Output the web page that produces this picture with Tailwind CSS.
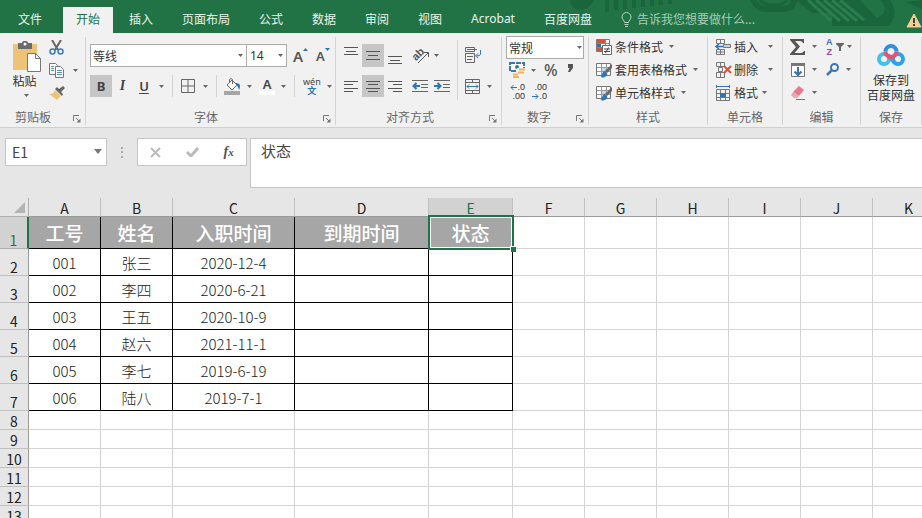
<!DOCTYPE html>
<html lang="zh-CN">
<head>
  <meta charset="UTF-8"/>
  <meta name="viewport" content="width=device-width, initial-scale=1.0"/>
  <title>Excel</title>
  <script src="https://cdn.jsdelivr.net/npm/@tailwindcss/browser@4"></script>
  <style>
    body {
      font-family: 'Noto Sans CJK SC', 'Noto Sans', sans-serif;
    }
    select {
      appearance: none;
    }
  </style>
</head>
<body class="h-screen flex flex-col overflow-hidden bg-[#e6e6e6] text-xs text-[#444444]">

  <!-- Shared icons -->
  <svg class="hidden">
    <symbol id="caret" viewBox="0 0 5 3"><path d="M0 0h5L2.500 3z" fill="#666"/></symbol>
    <symbol id="launcher" viewBox="0 0 8 8">
      <path d="M.5 6V.5H6M3 3l3 3" fill="none" stroke="#777"/><path d="M7.500 3.500v4h-4z" fill="#777"/>
    </symbol>
    <symbol id="tableBrush" viewBox="0 0 17 16">
      <path d="M.5 1.500h14v12H.5z" fill="#fff" stroke="#777"/>
      <path d="M5 5h5v4H5z" fill="#c5d5e8"/>
      <path d="M1 5.500h13M1 9.500h13M5.500 2v11M10.500 2v11" stroke="#999" fill="none"/>
      <path d="M16 2v4l-5 5-2-2z" fill="#666"/>
      <path d="M8.500 9l3 3c-1 3-4 4-7 3 2-1 1-5 4-6z" fill="#2e75b6"/>
    </symbol>
  </svg>

  <!-- Tabs -->
  <nav class="relative h-[33px] shrink-0 flex items-end gap-[3px] bg-[#217346] text-[#e8f3ec] whitespace-nowrap overflow-hidden">
    <svg class="absolute right-0 top-0 w-[362px] h-[33px]" viewBox="0 0 362 33" fill="none">
      <g stroke="#1b653c">
        <path d="M10 0q1 9 9 10 10 0 15-10" fill="#1b653c" stroke="none"/>
        <path d="M47 0v12M56 0v10M65 0v9M74 0v8M83 0v7M92 0v6M101 0v5M110 0v4" stroke-width="4"/>
        <path d="M192 -3q4 12 14 12h18q10-1 10-9" stroke-width="6"/>
        <path d="M200 0q5 6 15 5 9 0 12-5" stroke-width="3"/>
        <path d="M236 0h94q8 10 2 22l-4 4h-56v-13h-20z" fill="#1b653c" stroke="none"/>
        <path d="M345 2l17-2v9z" fill="#1b653c" stroke="none"/>
      </g>
      <path d="M248 0l23 21M256 0l24 21M264 0l25 21M272 0l25 21M280 0l24 20" stroke="#2b7d50" stroke-width="3"/>
      <path d="M300 0h20q7 6 3 14l-6 4z" fill="#217346"/>
    </svg>
    <button class="w-[60px] h-[26px] pb-[3px]">文件</button>
    <button class="relative w-[50px] h-[26px] pb-[3px] bg-[#f1f1f1] text-[#217346]">开始</button>
    <button class="relative h-[26px] pb-[3px] px-[13px]">插入</button>
    <button class="relative h-[26px] pb-[3px] px-[13px]">页面布局</button>
    <button class="relative h-[26px] pb-[3px] px-[13px]">公式</button>
    <button class="relative h-[26px] pb-[3px] px-[13px]">数据</button>
    <button class="relative h-[26px] pb-[3px] px-[13px]">审阅</button>
    <button class="relative h-[26px] pb-[3px] px-[13px]">视图</button>
    <button class="relative h-[26px] pb-[3px] px-[13px] font-['Noto_Sans']">Acrobat</button>
    <button class="relative h-[26px] pb-[3px] px-[13px]">百度网盘</button>
    <button class="relative h-[26px] pb-[2px] pl-[13px] flex items-center gap-[5px] text-[#a6cdb6]">
      <svg class="w-[11px] h-[15px]" viewBox="0 0 11 15" fill="none" stroke="#b5d5c2">
        <path d="M3.500 10.500c0-2-2.500-3-2.500-5.500a4.500 4.500 0 0 1 9 0c0 2.500-2.500 3.500-2.500 5.500zM3.500 12.500h4M4 14.500h3"/>
      </svg>
      告诉我您想要做什么...
    </button>
    <svg class="relative ml-auto mb-[5px] w-[16px] h-[15px] shrink-0" viewBox="0 0 16 15">
      <path d="M8 1l7 13H1z" fill="#f3cf93" stroke="#f3cf93" stroke-linejoin="round"/>
      <path d="M8 5v5M8 11v2" stroke="#444" stroke-width="2"/>
    </svg>
  </nav>

  <!-- Ribbon -->
  <div class="h-[95px] shrink-0 flex bg-[#f1f1f1] border-b border-[#d0d0d0] pt-1 pb-0.5 whitespace-nowrap text-[#333333]">

    <!-- Clipboard -->
    <section class="w-[86px] shrink-0 border-r border-[#d4d4d4] flex flex-col">
      <div class="flex-1 flex pl-3 gap-2">
        <button class="flex flex-col items-center self-start pt-1">
          <svg class="w-[29px] h-[31px]" viewBox="0 0 29 31">
            <path d="M1 3h24v26H1z" fill="#edc377"/>
            <path d="M6 2h4c0-3 6-3 6 0h4v6H6z" fill="#6b6b6b"/><circle cx="13" cy="3" r="1.500" fill="#fff"/>
            <path d="M15.500 12.500h8l5 5v13h-13z" fill="#fff" stroke="#777"/><path d="M23.500 12.500v5h5" fill="none" stroke="#777"/>
          </svg>
          <span class="leading-[18px] pr-1">粘贴</span>
          <svg class="w-[5px] h-[3px] mt-1"><use href="#caret"/></svg>
        </button>
        <div class="flex flex-col items-start gap-2 pt-[3px]">
          <button aria-label="剪切">
            <svg class="w-[15px] h-[15px]" viewBox="0 0 15 15" fill="none">
              <path d="M3 0l6 10M12 0L6 10" stroke="#666" stroke-width="2"/>
              <circle cx="3.500" cy="11.500" r="2.500" stroke="#3d7ab8" stroke-width="1.500"/><circle cx="11.500" cy="11.500" r="2.500" stroke="#3d7ab8" stroke-width="1.500"/>
            </svg>
          </button>
          <button class="flex items-center gap-2" aria-label="复制">
            <svg class="w-[16px] h-[15px]" viewBox="0 0 16 15" fill="#fff" stroke="#6a7a8a">
              <path d="M.5.500h6l2 2v9h-8z"/><path d="M6.500 3.500h5l3 3v8h-8z"/>
              <path d="M2 3.500h3M2 5.500h3M2 7.500h3M8 7.500h5M8 9.500h5M8 11.500h5" stroke="#5b8fc4"/>
            </svg>
            <svg class="w-[5px] h-[3px]"><use href="#caret"/></svg>
          </button>
          <button aria-label="格式刷">
            <svg class="w-[16px] h-[14px]" viewBox="0 0 16 14">
              <path d="M6 4l6 6-4 4-8-6c3 0 5-1 6-4z" fill="#edc377"/>
              <path d="M6 3l7 7 1-2-2-2 4-4-2-2-4 3-2-2z" fill="#666"/>
            </svg>
          </button>
        </div>
      </div>
      <div class="h-4 flex items-center">
        <span class="flex-1 pl-[15px] leading-4 text-[#666666]">剪贴板</span>
        <button class="mr-1 mt-1" aria-label="剪贴板设置"><svg class="w-2 h-2"><use href="#launcher"/></svg></button>
      </div>
    </section>

    <!-- Font -->
    <section class="w-[250px] shrink-0 border-r border-[#d4d4d4] flex flex-col">
      <div class="flex-1 flex flex-col pl-1 pt-[7px] gap-2">
        <div class="flex items-center">
          <div class="relative">
            <select aria-label="字体" class="block w-[157px] h-[23px] bg-white border border-[#ababab] pl-0.5 leading-5"><option>等线</option></select>
            <svg class="absolute right-1 top-[10px] w-[5px] h-[3px] pointer-events-none"><use href="#caret"/></svg>
          </div>
          <div class="relative">
            <select aria-label="字号" class="block w-[40px] h-[23px] bg-white border border-l-0 border-[#ababab] pl-[3px] leading-5 font-['Noto_Sans']"><option>14</option></select>
            <svg class="absolute right-1 top-[10px] w-[5px] h-[3px] pointer-events-none"><use href="#caret"/></svg>
          </div>
          <button class="ml-[6px] flex items-start font-['Noto_Sans'] font-semibold text-[15px] leading-5 text-[#555555]" aria-label="增大字号">A<svg class="w-[5px] h-[3px] mt-0.5" viewBox="0 0 5 3"><path d="M0 3h5L2.500 0z" fill="#2e75b6"/></svg></button>
          <button class="ml-2 flex items-start font-['Noto_Sans'] font-semibold text-[13px] leading-5 text-[#555555]" aria-label="减小字号">A<svg class="w-[5px] h-[3px] mt-0.5" viewBox="0 0 5 3"><path d="M0 0h5L2.500 3z" fill="#2e75b6"/></svg></button>
        </div>
        <div class="flex items-center h-[22px] font-['Noto_Sans'] text-sm text-[#444444]">
          <button class="w-[22px] h-[22px] bg-[#c6c6c6] font-bold text-[13px]">B</button>
          <button class="w-[21px] h-[22px] italic font-['Liberation_Serif'] font-bold">I</button>
          <button class="w-[22px] h-[22px] font-semibold underline underline-offset-2 text-[13px]">U</button>
          <svg class="ml-1 w-[5px] h-[3px]"><use href="#caret"/></svg>
          <span class="ml-2 w-px h-[22px] bg-[#d4d4d4]"></span>
          <button class="ml-2 flex items-center gap-2" aria-label="边框">
            <svg class="w-[14px] h-[14px]" viewBox="0 0 14 14" fill="none" stroke="#666"><path d="M.5.500h13v13H.5zM7 0v14M0 7h14"/></svg>
            <svg class="w-[5px] h-[3px]"><use href="#caret"/></svg>
          </button>
          <span class="ml-2 w-px h-[22px] bg-[#d4d4d4]"></span>
          <button class="ml-[7px] flex items-center gap-[6px]" aria-label="填充颜色">
            <svg class="w-[17px] h-[17px]" viewBox="0 0 17 17">
              <path d="M0 13h16v4H0z" fill="#a6a6a6"/>
              <path d="M8 2l5 5-5 5-5-5z" fill="#fff" stroke="#666"/><path d="M5.500 5V1.500q1.500-2 3 0V6" fill="none" stroke="#666"/>
              <path d="M12 5c4 0 5 3 3 7-1-3-1-4-3-5z" fill="#2e75b6"/>
            </svg>
            <svg class="w-[5px] h-[3px]"><use href="#caret"/></svg>
          </button>
          <button class="ml-[7px] flex items-center gap-[6px]" aria-label="字体颜色">
            <span class="w-[16px] border-b-4 border-white leading-[14px] font-semibold text-[13px]">A</span>
            <svg class="w-[5px] h-[3px]"><use href="#caret"/></svg>
          </button>
          <span class="ml-2 w-px h-[22px] bg-[#d4d4d4]"></span>
          <button class="ml-2 flex items-center gap-[6px]" aria-label="拼音指南">
            <span class="flex flex-col items-center text-[9px] leading-[9px]">wén<span class="font-['Noto_Sans_CJK_SC'] font-bold text-[#2e75b6]">文</span></span>
            <svg class="w-[5px] h-[3px]"><use href="#caret"/></svg>
          </button>
        </div>
      </div>
      <div class="h-4 flex items-center">
        <span class="flex-1 text-center leading-4 pl-[3px] text-[#666666]">字体</span>
        <button class="mr-1 mt-1" aria-label="字体设置"><svg class="w-2 h-2"><use href="#launcher"/></svg></button>
      </div>
    </section>

    <!-- Alignment -->
    <section class="w-[166px] shrink-0 border-r border-[#d4d4d4] flex flex-col">
      <div class="flex-1 flex pl-1 pt-[7px]">
        <div class="flex flex-col gap-2">
          <div class="flex items-center">
            <button class="w-[22px] h-[23px] flex justify-center pt-[3px]" aria-label="顶端对齐"><svg class="w-[14px] h-2" viewBox="0 0 14 8" stroke="#555"><path d="M0 .5h14M2 4.500h10M0 7.500h14"/></svg></button>
            <button class="w-[22px] h-[23px] flex items-center justify-center bg-[#c6c6c6]" aria-label="垂直居中"><svg class="w-[14px] h-[9px]" viewBox="0 0 14 9" stroke="#555"><path d="M0 .5h14M2 4.500h10M0 8.500h14"/></svg></button>
            <button class="w-[22px] h-[23px] flex items-end justify-center pb-[3px]" aria-label="底端对齐"><svg class="w-[14px] h-2" viewBox="0 0 14 8" stroke="#555"><path d="M0 .5h14M2 4.500h10M0 7.500h14"/></svg></button>
            <button class="ml-[6px] flex items-center gap-1" aria-label="方向">
              <svg class="w-[18px] h-[18px] overflow-visible" viewBox="0 0 18 18"><text x="0" y="11" transform="rotate(-45 6 8)" font-size="11" font-family="Liberation Sans" font-weight="700" fill="#555">ab</text><path d="M6 16L16 6M16.500 10V5.500H12" fill="none" stroke="#555"/></svg>
              <svg class="w-[5px] h-[3px]"><use href="#caret"/></svg>
            </button>
          </div>
          <div class="flex items-center h-[22px]">
            <button class="w-[22px] h-[22px] flex items-center justify-center" aria-label="左对齐"><svg class="w-[14px] h-[11px]" viewBox="0 0 14 11" stroke="#555"><path d="M0 .5h14M0 3.500h9M0 7.500h14M0 10.500h9"/></svg></button>
            <button class="w-[22px] h-[22px] flex items-center justify-center bg-[#c6c6c6]" aria-label="居中"><svg class="w-[14px] h-[11px]" viewBox="0 0 14 11" stroke="#555"><path d="M0 .5h14M2 3.500h10M0 7.500h14M2 10.500h10"/></svg></button>
            <button class="w-[22px] h-[22px] flex items-center justify-center" aria-label="右对齐"><svg class="w-[14px] h-[11px]" viewBox="0 0 14 11" stroke="#555"><path d="M0 .5h14M5 3.500h9M0 7.500h14M5 10.500h9"/></svg></button>
            <button class="ml-[6px]" aria-label="减少缩进"><svg class="w-4 h-[14px]" viewBox="0 0 16 14"><path d="M0 1.500h16M9 5.500h7M9 8.500h7M0 12.500h16" stroke="#666"/><path d="M8 7H2M4.500 4l-3 3 3 3" stroke="#2e75b6" stroke-width="2" fill="none"/></svg></button>
            <button class="ml-[6px]" aria-label="增加缩进"><svg class="w-4 h-[14px]" viewBox="0 0 16 14"><path d="M0 1.500h16M9 5.500h7M9 8.500h7M0 12.500h16" stroke="#666"/><path d="M0 7h6M3.500 4l3 3-3 3" stroke="#2e75b6" stroke-width="2" fill="none"/></svg></button>
          </div>
        </div>
        <span class="ml-[7px] -mt-1 w-px h-[60px] bg-[#d4d4d4]"></span>
        <div class="ml-[7px] flex flex-col gap-4 pt-[3px]">
          <button aria-label="自动换行"><svg class="w-[16px] h-[16px]" viewBox="0 0 16 16" fill="none" stroke="#666">
            <path d="M.5.500h9v4h-9zM.5 6.500h9v9h-9M.5 6v9"/><path d="M2 2.500h10M2 9.500h6M2 12.500h5"/><path d="M15.500 3v4q0 2-4 2M13 6.500L10.500 9l2.500 2" stroke="#2e75b6"/></svg></button>
          <button class="flex items-center gap-[7px]" aria-label="合并后居中">
            <svg class="w-[15px] h-[15px]" viewBox="0 0 15 15" fill="none" stroke="#666"><path d="M.5.500h14v14H.5zM0 3.500h15M0 11.500h15M7.500 0v3M7.500 12v3"/><path d="M2 7.500h11M4 5.500l-2 2 2 2M11 5.500l2 2-2 2" stroke="#2e75b6"/></svg>
            <svg class="w-[5px] h-[3px]"><use href="#caret"/></svg>
          </button>
        </div>
      </div>
      <div class="h-4 flex items-center">
        <span class="flex-1 text-center leading-4 pr-[5px] text-[#666666]">对齐方式</span>
        <button class="mr-1 mt-1" aria-label="对齐设置"><svg class="w-2 h-2"><use href="#launcher"/></svg></button>
      </div>
    </section>

    <!-- Number -->
    <section class="w-[87px] shrink-0 border-r border-[#d4d4d4] flex flex-col">
      <div class="flex-1 flex flex-col pl-1 -mt-px">
        <div class="relative">
          <select aria-label="数字格式" class="block w-[78px] h-[23px] bg-white border border-[#ababab] pl-0.5 leading-5"><option>常规</option></select>
          <svg class="absolute right-[6px] top-[10px] w-[5px] h-[3px] pointer-events-none"><use href="#caret"/></svg>
        </div>
        <div class="flex items-center h-[22px] pl-[3px] font-['Noto_Sans']">
          <button class="flex items-center gap-[6px]" aria-label="会计数字格式">
            <svg class="w-[16px] h-[16px]" viewBox="0 0 16 16"><path d="M1 1h14v8H1z" fill="#fff" stroke="#3d76b4" stroke-width="2" stroke-dasharray="5 1"/><circle cx="8" cy="5" r="2" fill="#2e75b6"/><path d="M8 6h8v10H3v-4h5z" fill="#f1f1f1"/><path d="M10 7.500h6M9 10.500h6M4 12.500h5M4 15h6" stroke="#edb45a" stroke-width="2"/></svg>
            <svg class="w-[5px] h-[3px]"><use href="#caret"/></svg>
          </button>
          <button class="ml-2 text-base leading-5 font-medium text-[#555555]">%</button>
          <button class="ml-[10px] mb-1" aria-label="千位分隔"><svg class="w-[5px] h-[8px]" viewBox="0 0 5 8"><path d="M0 0h5v4L2 8H0l1.500-4H0z" fill="#555"/></svg></button>
        </div>
        <div class="flex items-center h-[22px] pl-[3px] gap-[6px] font-['Liberation_Sans'] text-[9px] leading-[9px]">
          <button class="w-[16px] flex flex-col items-end"><span class="flex items-center"><svg class="w-[7px] h-[7px]" viewBox="0 0 7 7" fill="none" stroke="#2e75b6"><path d="M7 3.500H1M3.500 1L1 3.500 3.500 6"/></svg>.0</span><span>.00</span></button>
          <button class="w-[16px] flex flex-col items-end"><span>.00</span><span class="flex items-center"><svg class="w-[7px] h-[7px]" viewBox="0 0 7 7" fill="none" stroke="#2e75b6"><path d="M0 3.500h6M3.500 1L6 3.500 3.500 6"/></svg>.0</span></button>
        </div>
      </div>
      <div class="h-4 flex items-center">
        <span class="flex-1 text-center leading-4 text-[#666666]">数字</span>
        <button class="mr-1 mt-1" aria-label="数字设置"><svg class="w-2 h-2"><use href="#launcher"/></svg></button>
      </div>
    </section>

    <!-- Styles -->
    <section class="w-[119px] shrink-0 border-r border-[#d4d4d4] flex flex-col">
      <div class="flex-1 flex flex-col items-start pl-[7px] -mt-0.5">
        <button class="h-[23px] flex items-center">
          <svg class="w-[17px] h-[16px]" viewBox="0 0 17 16"><path d="M.5.500h13v12H.5z" fill="#fff" stroke="#777"/><path d="M1 1h8v3H1z" fill="#d0553a"/><path d="M1 5h4v3H1z" fill="#2e75b6"/><path d="M1 9h5v3H1z" fill="#d0553a"/><path d="M1 4.500h12M1 8.500h12M9.500 1v11" stroke="#888"/><path d="M6.500 6.500h9v9h-9z" fill="#fff" stroke="#666"/><path d="M8 10h6M8 12.500h6M12.500 8.500l-3 5.500" stroke="#444"/></svg>
          <span class="ml-0.5 mr-[6px]">条件格式</span><svg class="w-[5px] h-[3px]"><use href="#caret"/></svg>
        </button>
        <button class="h-[23px] flex items-center">
          <svg class="w-[17px] h-[16px]"><use href="#tableBrush"/></svg>
          <span class="ml-0.5 mr-[6px]">套用表格格式</span><svg class="w-[5px] h-[3px]"><use href="#caret"/></svg>
        </button>
        <button class="h-[23px] flex items-center">
          <svg class="w-[17px] h-[16px]"><use href="#tableBrush"/></svg>
          <span class="ml-0.5 mr-[6px]">单元格样式</span><svg class="w-[5px] h-[3px]"><use href="#caret"/></svg>
        </button>
      </div>
      <div class="h-4 text-center leading-4 text-[#666666]">样式</div>
    </section>

    <!-- Cells -->
    <section class="w-[75px] shrink-0 border-r border-[#d4d4d4] flex flex-col">
      <div class="flex-1 flex flex-col items-start pl-[7px] -mt-0.5">
        <button class="h-[23px] flex items-center">
          <svg class="w-[17px] h-[16px]" viewBox="0 0 17 16" fill="none" stroke="#777"><path d="M1.500.500h8v4h-8zM5.500 0v4M1.500 10.500h8v5h-8zM5.500 10v6M1 13h9"/><path d="M8.500 5.500h7v3h-7z" fill="#c5d5e8"/><path d="M8 7.500H1M4 5L1 7.500 4 10" stroke="#2e75b6" stroke-width="1.500"/></svg>
          <span class="ml-0.5 mr-[10px]">插入</span><svg class="w-[5px] h-[3px]"><use href="#caret"/></svg>
        </button>
        <button class="h-[23px] flex items-center">
          <svg class="w-[17px] h-[16px]" viewBox="0 0 17 16" fill="none" stroke="#777"><path d="M1.500.500h8v4h-8zM5.500 0v4M1.500 10.500h8v5h-8zM5.500 10v6M3.500 5.500h4v4h-4z"/><path d="M9 4l7 7M16 4l-7 7" stroke="#d8533a" stroke-width="2"/></svg>
          <span class="ml-0.5 mr-[10px]">删除</span><svg class="w-[5px] h-[3px]"><use href="#caret"/></svg>
        </button>
        <button class="h-[23px] flex items-center">
          <svg class="w-[17px] h-[16px]" viewBox="0 0 17 16" fill="none" stroke="#777"><path d="M1.500 4.500h13v11h-13zM1 8.500h14M1 12.500h14M5.500 4v12M10.500 4v12"/><path d="M5 8h6v4H5z" fill="#2e75b6" stroke="none"/><path d="M1.500 0v3M14.500 0v3M2 1.500h12" stroke="#2e75b6"/></svg>
          <span class="ml-0.5 mr-1">格式</span><svg class="w-[5px] h-[3px]"><use href="#caret"/></svg>
        </button>
      </div>
      <div class="h-4 text-center leading-4 text-[#666666]">单元格</div>
    </section>

    <!-- Editing -->
    <section class="w-[78px] shrink-0 border-r border-[#d4d4d4] flex flex-col">
      <div class="flex-1 grid grid-cols-[36px_1fr] auto-rows-[23px] content-start pl-[7px] -mt-0.5">
        <button class="flex items-center gap-[6px]" aria-label="自动求和"><svg class="w-4 h-4" viewBox="0 0 16 16"><path d="M0 0h14v4h-1q-1-2-3-2H5l5 5.500L4.500 14H11q2 0 3-2h1v4H0v-1l6-7-6-7z" fill="#555"/></svg><svg class="w-[5px] h-[3px]"><use href="#caret"/></svg></button>
        <button class="flex items-center gap-[3px]" aria-label="排序和筛选">
          <span class="flex flex-col font-['Liberation_Sans'] font-bold text-[9px] leading-[10px] text-[#3d76b4]">A<span class="text-[#9b3fb5]">Z</span></span>
          <svg class="w-2 h-2" viewBox="0 0 8 8"><path d="M0 0h8v1L5 4v4H3V4L0 1z" fill="#666"/></svg>
          <svg class="w-[5px] h-[3px]"><use href="#caret"/></svg>
        </button>
        <button class="flex items-center gap-[6px]" aria-label="填充"><svg class="w-4 h-4" viewBox="0 0 16 16"><path d="M1.500 1.500h13v13h-13z" fill="#fff" stroke="#777"/><path d="M1 1h14v3H1z" fill="#777"/><path d="M8 5v8M4.500 9.500L8 13l3.500-3.500" fill="none" stroke="#2e75b6" stroke-width="2"/></svg><svg class="w-[5px] h-[3px]"><use href="#caret"/></svg></button>
        <button class="flex items-center gap-[6px]" aria-label="查找和选择"><svg class="w-[14px] h-[13px]" viewBox="0 0 14 13" fill="none" stroke="#3d76b4"><circle cx="8.500" cy="4.500" r="3.500" stroke-width="2"/><path d="M6 7l-5 5" stroke-width="2.500"/></svg><svg class="w-[5px] h-[3px]"><use href="#caret"/></svg></button>
        <button class="flex items-center gap-[6px]" aria-label="清除"><svg class="w-4 h-4" viewBox="0 0 16 16"><path d="M9 1l5 4-5 6-6-4z" fill="#e8798c"/><path d="M3 7l6 4-2 2H4l-3-3z" fill="#f0a3ae"/><path d="M6 14.500h9" stroke="#777"/></svg><svg class="w-[5px] h-[3px]"><use href="#caret"/></svg></button>
      </div>
      <div class="h-4 text-center leading-4 text-[#666666]">编辑</div>
    </section>

    <!-- Baidu netdisk -->
    <section class="w-[61px] shrink-0 border-r border-[#d4d4d4] flex flex-col">
      <button class="flex-1 flex flex-col items-center justify-start pt-[6px] leading-[15px]">
        <svg class="w-[28px] h-[24px] mb-[5px]" viewBox="0 0 28 24" fill="none" stroke-width="4">
          <circle cx="7" cy="16" r="5" stroke="#45c0ee"/>
          <circle cx="21" cy="16" r="5" stroke="#2ba5ea"/>
          <path d="M11 12l7 8" stroke="#2ba5ea"/>
          <path d="M8.500 8.500a5.500 5.500 0 0 1 11 0" stroke="#2f8de4"/>
          <path d="M8.500 8.500a5.500 5.500 0 0 0 11 0" stroke="#ee4f6b"/>
        </svg>
        <span>保存到</span><span>百度网盘</span>
      </button>
      <div class="h-4 text-center leading-4 text-[#666666]">保存</div>
    </section>
  </div>

  <!-- Formula bar -->
  <div class="h-[70px] shrink-0 flex items-start pt-[10px] pl-[5px]">
    <div class="relative">
      <input type="text" aria-label="名称框" value="E1" class="block w-[102px] h-7 bg-white border border-[#c6c6c6] pl-[6px] text-sm text-[#444444]"/>
      <svg class="absolute right-[5px] top-[11px] w-[8px] h-[5px]" viewBox="0 0 8 5"><path d="M0 0h8L4 5z" fill="#777"/></svg>
    </div>
    <svg class="ml-[14px] mt-[9px] w-[2px] h-[11px]" viewBox="0 0 2 11" fill="#aaa"><path d="M0 0h2v2H0zM0 4h2v2H0zM0 9h2v2H0z"/></svg>
    <div class="ml-[14px] w-[110px] h-7 bg-white border border-[#c6c6c6] flex items-center justify-around">
      <button aria-label="取消"><svg class="w-[11px] h-[11px]" viewBox="0 0 11 11"><path d="M1 1l9 9M10 1l-9 9" stroke="#bbb" stroke-width="2"/></svg></button>
      <button aria-label="输入"><svg class="w-[13px] h-[10px]" viewBox="0 0 13 10"><path d="M1 5l4 4 7-8" fill="none" stroke="#bbb" stroke-width="3"/></svg></button>
      <button class="font-['Liberation_Serif'] italic font-bold text-sm leading-4 text-[#555555]">f<span class="text-[11px]">x</span></button>
    </div>
    <textarea aria-label="编辑栏" class="ml-[3px] flex-1 h-[50px] resize-none bg-white border border-r-0 border-[#c6c6c6] pl-[10px] pt-px text-[15px] leading-[22px] text-[#444444]">状态</textarea>
  </div>

  <!-- Sheet -->
  <div class="flex-1 overflow-hidden bg-white">
    <table class="table-fixed border-separate border-spacing-0 w-[945px] text-center text-[15px] text-[#222222]">
      <colgroup>
        <col class="w-[29px]"><col class="w-[72px]"><col class="w-[72px]"><col class="w-[122px]"><col class="w-[134px]"><col class="w-[84px]">
        <col><col><col><col><col><col>
      </colgroup>
      <thead>
        <tr id="letters" class="h-[19px] text-sm leading-4 bg-[#e6e6e6]">
          <th class="p-0 border-r border-b border-[#b0b0b0]">
            <svg class="ml-auto mr-[3px] w-[11px] h-[11px]" viewBox="0 0 11 11"><path d="M11 0v11H0z" fill="#b4b4b4"/></svg>
          </th>
        </tr>
      </thead>
      <tbody id="sheetBody"></tbody>
    </table>
  </div>

  <script>
    const letters = ['A', 'B', 'C', 'D', 'E', 'F', 'G', 'H', 'I', 'J', 'K'];
    const titles = ['工号', '姓名', '入职时间', '到期时间', '状态'];
    const people = [
      ['001', '张三', '2020-12-4', '', ''],
      ['002', '李四', '2020-6-21', '', ''],
      ['003', '王五', '2020-10-9', '', ''],
      ['004', '赵六', '2021-11-1', '', ''],
      ['005', '李七', '2019-6-19', '', ''],
      ['006', '陆八', '2019-7-1', '', '']
    ];
    const blank = '<td class="p-0 border-r border-b border-[#d4d4d4]"></td>';

    function rowHead(n, active) {
      const look = active
        ? 'bg-[#d2d2d2] text-[#217346] border-r-2 border-r-[#217346] border-b-[#b0b0b0]'
        : 'border-r border-r-[#9b9b9b] border-b-[#c0c0c0] bg-[#e6e6e6]';
      return `<th class="p-0 align-bottom text-sm leading-4 font-normal border-b ${look}">${n}</th>`;
    }

    letters.forEach(l => {
      const look = l === 'E' ? 'bg-[#d2d2d2] text-[#217346]' : '';
      document.getElementById('letters').innerHTML +=
        `<th class="p-0 pt-0.5 font-normal border-r border-r-[#c0c0c0] border-b border-b-[#9b9b9b] ${look}">${l}</th>`;
    });

    // Header row, E1 is selected
    let rows = `<tr class="h-8">${rowHead(1, true)}`;
    titles.forEach((t, i) => {
      const selected = i === 4 ? `
        <span class="absolute -left-px -right-[2px] -top-[2px] -bottom-[2px] border-2 border-[#217346]"></span>
        <span class="absolute inset-0 left-px border border-white"></span>
        <span class="absolute -right-[4px] -bottom-[4px] w-[6px] h-[6px] bg-[#217346] border-l border-t border-white"></span>` : '';
      rows += `<td class="relative p-0 bg-[#a6a6a6] text-white font-medium text-[19px] leading-[30px] border-r border-b border-black">${t}${selected}</td>`;
    });
    rows += blank.repeat(6) + '</tr>';

    people.forEach((p, i) => {
      rows += `<tr class="h-[27px]">${rowHead(i + 2)}`;
      p.forEach(v => rows += `<td class="p-0 pt-0.5 leading-6 font-light border-r border-b border-black">${v}</td>`);
      rows += blank.repeat(6) + '</tr>';
    });

    for (let n = 8; n <= 13; n++) {
      rows += `<tr class="h-[19px]">${rowHead(n)}${blank.repeat(11)}</tr>`;
    }
    document.getElementById('sheetBody').innerHTML = rows;
  </script>
</body>
</html>
